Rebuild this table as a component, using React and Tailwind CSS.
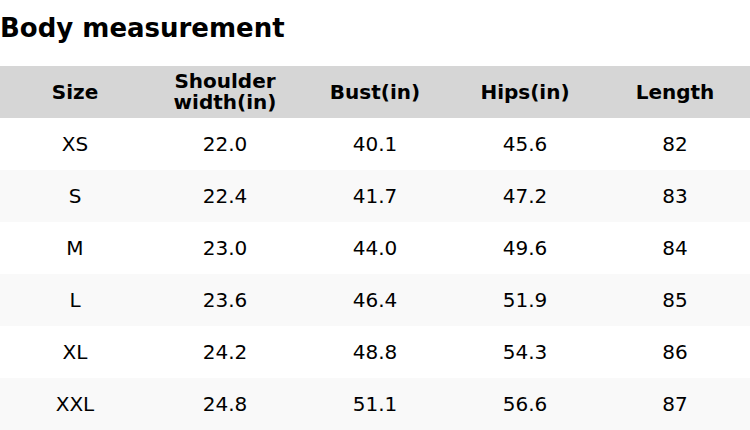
const HEADERS = ["Size", "Shoulder width(in)", "Bust(in)", "Hips(in)", "Length"];

const ROWS = [
  ["XS", "22.0", "40.1", "45.6", "82"],
  ["S", "22.4", "41.7", "47.2", "83"],
  ["M", "23.0", "44.0", "49.6", "84"],
  ["L", "23.6", "46.4", "51.9", "85"],
  ["XL", "24.2", "48.8", "54.3", "86"],
  ["XXL", "24.8", "51.1", "56.6", "87"],
];

export default function App() {
  return (
    <div className="w-[750px] h-[430px] overflow-hidden bg-white text-black font-['DejaVu_Sans',sans-serif]">
      <h2 className="h-[66px] pt-[13px] text-[26px] leading-[30px] font-bold">Body measurement</h2>
      <table className="w-full border-collapse table-fixed">
        <thead>
          <tr className="bg-[#d6d6d6] h-[52px]">
            {HEADERS.map((h) => (
              <th key={h} className="w-[150px] px-[20px] text-[20px] leading-[21px] font-bold text-center">
                {h}
              </th>
            ))}
          </tr>
        </thead>
        <tbody>
          {ROWS.map((r, i) => (
            <tr key={r[0]} className={`h-[52px] ${i % 2 ? "bg-[#f9f9f9]" : "bg-white"}`}>
              {r.map((c, j) => (
                <td key={j} className="text-center text-[20px] leading-[22px]">
                  {c}
                </td>
              ))}
            </tr>
          ))}
        </tbody>
      </table>
    </div>
  );
}
